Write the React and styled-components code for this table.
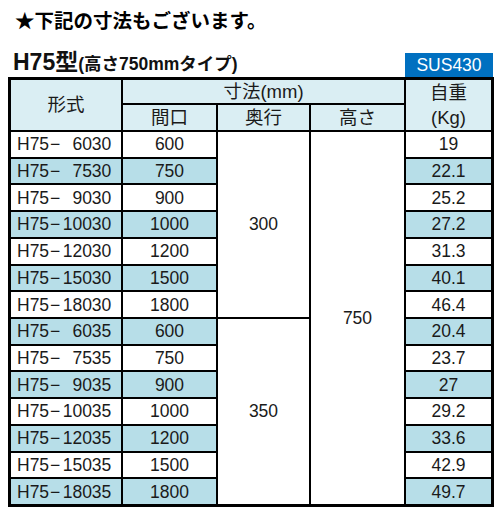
import React from "react";
import styled, { createGlobalStyle } from "styled-components";

const GlobalStyle = createGlobalStyle`
  html, body { margin: 0; padding: 0; background: #fff; }
  body { font-family: "Liberation Sans", "Noto Sans CJK JP", sans-serif; color: #111; }
`;

const Page = styled.div`
  width: 503px;
  padding: 0 0 0 8px;
  box-sizing: border-box;
`;

const Title = styled.h1`
  margin: 0;
  padding: 7px 0 0 7px;
  font-family: "Noto Sans CJK JP", sans-serif;
  font-size: 19.5px;
  line-height: 26px;
  font-weight: 700;
  color: #000;
`;

const CaptionRow = styled.div`
  display: flex;
  justify-content: space-between;
  align-items: flex-end;
  margin-top: 17px;
  width: 486px;
`;

const Caption = styled.div`
  display: flex;
  align-items: baseline;
  padding-left: 5px;
  font-weight: 700;
  color: #111;
`;

const CaptionMain = styled.span`
  font-family: "Liberation Sans", "Noto Sans CJK JP", sans-serif;
  font-size: 23px;
  line-height: 25px;
`;

const CaptionSub = styled.span`
  font-family: "Liberation Sans", "Noto Sans CJK JP", sans-serif;
  font-size: 17.5px;
  line-height: 25px;
`;

const Badge = styled.div`
  width: 88px;
  height: 24px;
  margin-right: 1px;
  background: #0070c0;
  color: #fff;
  font-family: "Liberation Sans", sans-serif;
  font-size: 17.5px;
  line-height: 24px;
  text-align: center;
`;

const Grid = styled.div`
  display: grid;
  grid-template-columns: 110px 93px 91px 93px 85px;
  grid-template-rows: 23px 25px repeat(14, 1fr);
  gap: 2px;
  padding: 3px;
  width: 486px;
  height: 430px;
  box-sizing: border-box;
  background: #000;
`;

const Cell = styled.div`
  grid-column: ${(p) => p.$col};
  grid-row: ${(p) => p.$row};
  background: ${(p) =>
    p.$tone === "head" ? "#daeef3" : p.$tone === "blue" ? "#b7dee8" : "#ffffff"};
  display: flex;
  flex-direction: column;
  align-items: ${(p) => (p.$left ? "flex-start" : "center")};
  justify-content: center;
  padding-left: ${(p) => (p.$left ? "6px" : "0")};
  font-family: "Liberation Sans", "Noto Sans CJK JP", sans-serif;
  font-size: ${(p) => (p.$tone === "head" ? "18.5px" : "17.5px")};
  line-height: 24px;
  color: #1a1a1a;
  white-space: nowrap;
`;

const HeadLine = styled.span`
  display: block;
  height: ${(p) => p.$h}px;
  line-height: ${(p) => p.$h}px;
`;

const Model = styled.span`
  display: flex;
  align-items: baseline;
`;

const Dash = styled.span`
  margin: 0 2px 0 1px;
`;

const ModelNum = styled.span`
  display: inline-block;
  width: 49px;
  text-align: right;
`;

const rows = [
  ["6030", "600", "19"],
  ["7530", "750", "22.1"],
  ["9030", "900", "25.2"],
  ["10030", "1000", "27.2"],
  ["12030", "1200", "31.3"],
  ["15030", "1500", "40.1"],
  ["18030", "1800", "46.4"],
  ["6035", "600", "20.4"],
  ["7535", "750", "23.7"],
  ["9035", "900", "27"],
  ["10035", "1000", "29.2"],
  ["12035", "1200", "33.6"],
  ["15035", "1500", "42.9"],
  ["18035", "1800", "49.7"],
];

export default function App() {
  return (
    <Page>
      <GlobalStyle />
      <Title>★下記の寸法もございます。</Title>
      <CaptionRow>
        <Caption>
          <CaptionMain>H75型</CaptionMain>
          <CaptionSub>(高さ750mmタイプ)</CaptionSub>
        </Caption>
        <Badge>SUS430</Badge>
      </CaptionRow>
      <Grid>
        <Cell $col="1" $row="1 / 3" $tone="head">形式</Cell>
        <Cell $col="2 / 5" $row="1" $tone="head">寸法(mm)</Cell>
        <Cell $col="2" $row="2" $tone="head">間口</Cell>
        <Cell $col="3" $row="2" $tone="head">奥行</Cell>
        <Cell $col="4" $row="2" $tone="head">高さ</Cell>
        <Cell $col="5" $row="1 / 3" $tone="head">
          <HeadLine $h={24}>自重</HeadLine>
          <HeadLine $h={25}>(Kg)</HeadLine>
        </Cell>
        {rows.map(([code, w, kg], i) => {
          const r = i + 3;
          const tone = i % 2 === 1 ? "blue" : "white";
          return (
            <React.Fragment key={code}>
              <Cell $col="1" $row={`${r}`} $tone={tone} $left>
                <Model>
                  <span>H75</span>
                  <Dash>−</Dash>
                  <ModelNum>{code}</ModelNum>
                </Model>
              </Cell>
              <Cell $col="2" $row={`${r}`} $tone={tone}>{w}</Cell>
              <Cell $col="5" $row={`${r}`} $tone={tone}>{kg}</Cell>
            </React.Fragment>
          );
        })}
        <Cell $col="3" $row="3 / 10" $tone="white">300</Cell>
        <Cell $col="3" $row="10 / 17" $tone="white">350</Cell>
        <Cell $col="4" $row="3 / 17" $tone="white">750</Cell>
      </Grid>
    </Page>
  );
}
